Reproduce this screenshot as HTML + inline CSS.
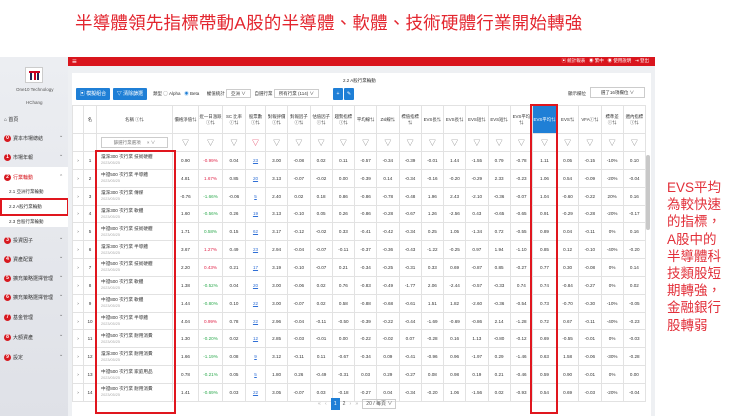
<!DOCTYPE html>
<html><head><meta charset="utf-8">
<style>
*{margin:0;padding:0;box-sizing:border-box}
body{width:740px;height:416px;background:#fff;position:relative;overflow:hidden;font-family:"Liberation Sans","Noto Sans CJK TC",sans-serif;color:#333}
.abs{position:absolute}
.title{left:75px;top:10px;font-size:17.5px;color:#e3262f;letter-spacing:0.2px;white-space:nowrap}
.side{left:0;top:57px;width:68px;height:359px;background:linear-gradient(#eceef2,#dfe1e7)}
.side .it{position:absolute;left:4px;font-size:5px;color:#333;white-space:nowrap}
.num{display:inline-block;width:7px;height:7px;border-radius:50%;background:#d71920;color:#fff;font-size:5px;text-align:center;line-height:7px;font-weight:bold;margin-right:2px;vertical-align:middle}
.chev{position:absolute;left:59px;font-size:5px;color:#666}
.redbar{left:68px;top:57px;width:587px;height:9px;background:#d9151d}
.main{left:68px;top:66px;width:587px;height:350px;background:#eef0f3}
.panel{left:72px;top:73px;width:579px;height:343px;background:#fff}
table{position:absolute;left:72px;top:105px;width:574px;border-collapse:collapse;table-layout:fixed;font-size:4.6px}
td{border:0.5px solid #e2e2e2;text-align:center;color:#333;overflow:hidden;white-space:nowrap}
tr.h td{height:28px;font-size:4.4px;line-height:6px;white-space:normal}
tr.f td{height:18px;color:#777;font-size:7px}
tr.d td{height:17.85px}
td.nm{text-align:left;padding-left:4px;line-height:6px}
td.nm span{color:#aaa;font-size:3.8px}
.r{color:#e0264a}.g{color:#2eaa4f}.l{color:#2f6fd6;text-decoration:underline}
.btn{height:12px;background:#1f7fd6;color:#fff;font-size:5px;line-height:12px;text-align:center;border-radius:1px}
.box{border:2px solid #e0161e}
.note{left:667px;top:179px;font-size:13.5px;line-height:17.2px;color:#e2303a;white-space:nowrap}
</style></head><body>
<div class="abs title">半導體領先指標帶動A股的半導體、軟體、技術硬體行業開始轉強</div>

<div class="abs side">
 <div style="position:absolute;left:25px;top:10px;width:18px;height:16px;border:1px solid #ccc;background:#fff"><div style="position:absolute;left:3px;top:3px;width:11px;height:9px;border-top:2px solid #c02;"></div><div style="position:absolute;left:4px;top:5px;width:2px;height:7px;background:#225"></div><div style="position:absolute;left:8px;top:5px;width:2px;height:7px;background:#c02"></div><div style="position:absolute;left:11px;top:5px;width:2px;height:7px;background:#225"></div></div>
 <div class="it" style="left:16px;top:30px;font-size:4.5px;color:#555">One10 Technology</div>
 <div class="it" style="left:26px;top:43px;font-size:4.5px;color:#555">HChang</div>
 <div class="it" style="top:59px">⌂ 首頁</div>
 <div class="it" style="top:78px"><span class="num">0</span>資本市場總結</div><div class="chev" style="top:76px">⌄</div>
 <div class="it" style="top:97px"><span class="num">1</span>市場年報</div><div class="chev" style="top:95px">⌄</div>
 <div style="position:absolute;left:0;top:110px;width:68px;height:60px;background:#fff"></div>
 <div class="it" style="top:117px;color:#d71920"><span class="num">2</span>行業輪動</div><div class="chev" style="top:117px">⌃</div>
 <div class="it" style="left:9px;top:132px;font-size:4.5px">2.1 亞洲行業輪動</div>
 <div class="it" style="left:9px;top:147px;font-size:4.5px">2.2 A股行業輪動</div>
 <div class="it" style="left:9px;top:162px;font-size:4.5px">2.3 台股行業輪動</div>
 <div class="it" style="top:180px"><span class="num">3</span>投資因子</div><div class="chev" style="top:178px">⌄</div>
 <div class="it" style="top:199px"><span class="num">4</span>資產配置</div><div class="chev" style="top:197px">⌄</div>
 <div class="it" style="top:218px"><span class="num">5</span>擴充策略選擇管理</div><div class="chev" style="top:216px">⌄</div>
 <div class="it" style="top:237px"><span class="num">6</span>擴充策略選擇管理</div><div class="chev" style="top:235px">⌄</div>
 <div class="it" style="top:257px"><span class="num">7</span>基金管理</div><div class="chev" style="top:255px">⌄</div>
 <div class="it" style="top:277px"><span class="num">8</span>大額資產</div><div class="chev" style="top:275px">⌄</div>
 <div class="it" style="top:297px"><span class="num">9</span>設定</div><div class="chev" style="top:295px">⌄</div>
</div>
<div class="abs box" style="left:0;top:198px;width:69px;height:18px"></div>

<div class="abs redbar"><span style="position:absolute;left:4px;top:0;color:#fff;font-size:8px;line-height:9px">≡</span><span style="position:absolute;right:6px;top:1px;color:#fff;font-size:4.5px;white-space:nowrap">▣ 統計報表 &nbsp; ◉ 繁中 &nbsp; ◉ 使用說明 &nbsp; ⇥ 登出</span></div>
<div class="abs main"></div>
<div class="abs panel"></div>
<div class="abs" style="left:343px;top:78px;font-size:4.5px">2.2 A股行業輪動</div>
<div class="abs btn" style="left:76px;top:88px;width:34px">▣ 模擬組合</div>
<div class="abs btn" style="left:113px;top:88px;width:34px">▽ 清除篩選</div>
<div class="abs" style="left:153px;top:91px;font-size:4.5px;white-space:nowrap">類型 ◯ Alpha &nbsp; <span style="color:#1f7fd6">◉</span> Beta &nbsp;&nbsp;&nbsp;&nbsp; 權值統計 <span style="border:0.5px solid #ccc;padding:1px 4px">亞洲 ∨</span> &nbsp; 自選行業 <span style="border:0.5px solid #ccc;padding:1px 4px">所有行業 (114) ∨</span></div>
<div class="abs btn" style="left:333px;top:88px;width:10px">+</div>
<div class="abs btn" style="left:344px;top:88px;width:10px">✎</div>
<div class="abs" style="left:568px;top:91px;font-size:4.5px">顯示欄位</div>
<div class="abs" style="left:590px;top:87px;width:55px;height:11px;border:0.5px solid #ccc;font-size:4.5px;line-height:10px;text-align:center">選了16項欄位 ∨</div>

<table>
<colgroup><col style="width:11px"><col style="width:13px"><col style="width:76px"><col style="width:26px"><col style="width:24px"><col style="width:23px"><col style="width:20px"><col span="12" style="width:22.25px"><col style="width:24px"><col span="4" style="width:22.25px"></colgroup>
<tr class="h"><td></td><td>名</td><td>名稱 ⓘ⇅</td><td>價格淨值⇅</td><td>近一日漲跌ⓘ⇅</td><td>SC 比率ⓘ⇅</td><td>股票數ⓘ⇅</td><td>對報評價ⓘ⇅</td><td>對報因子ⓘ⇅</td><td>估值因子ⓘ⇅</td><td>趨勢指標ⓘ⇅</td><td>平均線⇅</td><td>Zsl線⇅</td><td>標值指標⇅</td><td>EVS長⇅</td><td>EVS長⇅</td><td>EVS短⇅</td><td>EVS短⇅</td><td>EVS平均⇅</td><td style="background:#1f7fd6;color:#fff">EVS平均⇅</td><td>EVS⇅</td><td>VFAⓘ⇅</td><td>標準差ⓘ⇅</td><td>週內指標ⓘ⇅</td></tr>
<tr class="f"><td></td><td></td><td><div style="border:0.5px solid #ccc;margin:0 4px;height:11px;font-size:4.5px;line-height:10px">篩選行業選項 &nbsp;&nbsp;&nbsp; × ∨</div></td><td>▽</td><td>▽</td><td>▽</td><td style="color:#e0264a">▽</td><td>▽</td><td>▽</td><td>▽</td><td>▽</td><td>▽</td><td>▽</td><td>▽</td><td>▽</td><td>▽</td><td>▽</td><td>▽</td><td>▽</td><td>▽</td><td>▽</td><td>▽</td><td>▽</td><td>▽</td></tr>
<tr class="d"><td>›</td><td>1</td><td class="nm">滬深300 次行業 技術硬體<br><span>2023/05/25</span></td><td>0.90</td><td class="r">-0.99%</td><td>0.04</td><td class="l">23</td><td>3.00</td><td>-0.08</td><td>0.02</td><td>0.11</td><td>-0.57</td><td>-0.34</td><td>-0.39</td><td>-0.01</td><td>1.44</td><td>-1.55</td><td>0.79</td><td>-0.78</td><td>1.11</td><td>0.05</td><td>-0.15</td><td>-10%</td><td>0.10</td></tr>
<tr class="d"><td>›</td><td>2</td><td class="nm">中證500 次行業 半導體<br><span>2023/05/25</span></td><td>4.81</td><td class="r">1.67%</td><td>0.85</td><td class="l">20</td><td>3.13</td><td>-0.07</td><td>-0.02</td><td>0.00</td><td>-0.39</td><td>0.14</td><td>-0.34</td><td>-0.16</td><td>-0.20</td><td>-0.29</td><td>2.33</td><td>-0.23</td><td>1.06</td><td>0.54</td><td>-0.09</td><td>-20%</td><td>-0.04</td></tr>
<tr class="d"><td>›</td><td>3</td><td class="nm">滬深300 次行業 傳媒<br><span>2023/05/25</span></td><td>-0.76</td><td class="g">-1.66%</td><td>-0.06</td><td class="l">5</td><td>2.40</td><td>0.02</td><td>0.18</td><td>0.86</td><td>-0.86</td><td>-0.78</td><td>-0.48</td><td>1.96</td><td>2.43</td><td>-2.10</td><td>-0.36</td><td>-0.07</td><td>1.04</td><td>-0.60</td><td>-0.22</td><td>20%</td><td>0.16</td></tr>
<tr class="d"><td>›</td><td>4</td><td class="nm">滬深300 次行業 軟體<br><span>2023/05/25</span></td><td>1.60</td><td class="g">-0.56%</td><td>0.26</td><td class="l">19</td><td>3.13</td><td>-0.10</td><td>0.05</td><td>0.26</td><td>-0.86</td><td>-0.28</td><td>-0.67</td><td>1.26</td><td>-2.56</td><td>0.43</td><td>-0.65</td><td>-0.65</td><td>0.91</td><td>-0.29</td><td>-0.28</td><td>-20%</td><td>-0.17</td></tr>
<tr class="d"><td>›</td><td>5</td><td class="nm">中證800 次行業 技術硬體<br><span>2023/05/25</span></td><td>1.71</td><td class="g">0.58%</td><td>0.15</td><td class="l">62</td><td>3.17</td><td>-0.12</td><td>-0.02</td><td>0.33</td><td>-0.41</td><td>-0.42</td><td>-0.34</td><td>0.25</td><td>1.05</td><td>-1.34</td><td>0.72</td><td>-0.55</td><td>0.89</td><td>0.04</td><td>-0.11</td><td>0%</td><td>0.16</td></tr>
<tr class="d"><td>›</td><td>6</td><td class="nm">滬深300 次行業 半導體<br><span>2023/05/25</span></td><td>3.67</td><td class="r">1.27%</td><td>0.49</td><td class="l">23</td><td>2.94</td><td>-0.04</td><td>-0.07</td><td>-0.11</td><td>-0.37</td><td>-0.36</td><td>-0.43</td><td>-1.22</td><td>-0.25</td><td>0.97</td><td>1.94</td><td>-1.10</td><td>0.85</td><td>0.12</td><td>-0.10</td><td>-40%</td><td>-0.20</td></tr>
<tr class="d"><td>›</td><td>7</td><td class="nm">中證500 次行業 技術硬體<br><span>2023/05/25</span></td><td>2.20</td><td class="r">0.43%</td><td>0.21</td><td class="l">17</td><td>3.19</td><td>-0.10</td><td>-0.07</td><td>0.21</td><td>-0.34</td><td>-0.25</td><td>-0.31</td><td>0.33</td><td>0.69</td><td>-0.87</td><td>0.85</td><td>-0.27</td><td>0.77</td><td>0.30</td><td>-0.08</td><td>0%</td><td>0.14</td></tr>
<tr class="d"><td>›</td><td>8</td><td class="nm">中證500 次行業 軟體<br><span>2023/05/25</span></td><td>1.38</td><td class="g">-0.52%</td><td>0.04</td><td class="l">20</td><td>3.00</td><td>-0.06</td><td>0.02</td><td>0.76</td><td>-0.83</td><td>-0.49</td><td>-1.77</td><td>2.06</td><td>-2.44</td><td>-0.57</td><td>-0.33</td><td>0.74</td><td>0.74</td><td>-0.84</td><td>-0.27</td><td>0%</td><td>0.02</td></tr>
<tr class="d"><td>›</td><td>9</td><td class="nm">中證800 次行業 軟體<br><span>2023/05/25</span></td><td>1.44</td><td class="g">-0.80%</td><td>0.10</td><td class="l">22</td><td>3.00</td><td>-0.07</td><td>0.02</td><td>0.58</td><td>-0.88</td><td>-0.68</td><td>-0.61</td><td>1.51</td><td>1.82</td><td>-2.60</td><td>-0.36</td><td>-0.54</td><td>0.73</td><td>-0.70</td><td>-0.30</td><td>-10%</td><td>-0.05</td></tr>
<tr class="d"><td>›</td><td>10</td><td class="nm">中證800 次行業 半導體<br><span>2023/05/25</span></td><td>4.04</td><td class="r">0.99%</td><td>0.78</td><td class="l">22</td><td>2.96</td><td>-0.04</td><td>-0.11</td><td>-0.50</td><td>-0.39</td><td>-0.22</td><td>-0.44</td><td>-1.69</td><td>-0.69</td><td>-0.86</td><td>2.14</td><td>-1.28</td><td>0.72</td><td>0.67</td><td>-0.11</td><td>-40%</td><td>-0.23</td></tr>
<tr class="d"><td>›</td><td>11</td><td class="nm">中證500 次行業 耐用消費<br><span>2023/05/25</span></td><td>1.30</td><td class="g">-0.20%</td><td>0.02</td><td class="l">12</td><td>2.85</td><td>-0.03</td><td>-0.01</td><td>0.00</td><td>-0.22</td><td>-0.02</td><td>0.07</td><td>-0.28</td><td>0.16</td><td>1.13</td><td>-0.80</td><td>-0.12</td><td>0.69</td><td>-0.55</td><td>-0.01</td><td>0%</td><td>-0.03</td></tr>
<tr class="d"><td>›</td><td>12</td><td class="nm">滬深300 次行業 耐用消費<br><span>2023/05/25</span></td><td>1.66</td><td class="g">-1.19%</td><td>0.08</td><td class="l">9</td><td>3.12</td><td>-0.11</td><td>0.11</td><td>-0.67</td><td>-0.34</td><td>0.09</td><td>-0.41</td><td>-0.96</td><td>0.96</td><td>-1.97</td><td>0.29</td><td>-1.46</td><td>0.63</td><td>1.58</td><td>-0.06</td><td>-30%</td><td>-0.28</td></tr>
<tr class="d"><td>›</td><td>13</td><td class="nm">中證500 次行業 家庭用品<br><span>2023/05/25</span></td><td>0.78</td><td class="g">-0.21%</td><td>0.05</td><td class="l">5</td><td>1.80</td><td>0.26</td><td>-0.49</td><td>-0.31</td><td>0.03</td><td>0.29</td><td>-0.27</td><td>0.08</td><td>0.98</td><td>0.19</td><td>0.21</td><td>-0.46</td><td>0.59</td><td>0.90</td><td>-0.01</td><td>0%</td><td>0.00</td></tr>
<tr class="d"><td>›</td><td>14</td><td class="nm">中證800 次行業 耐用消費<br><span>2023/05/25</span></td><td>1.41</td><td class="g">-0.69%</td><td>0.03</td><td class="l">22</td><td>3.05</td><td>-0.07</td><td>0.03</td><td>-0.18</td><td>-0.27</td><td>0.04</td><td>-0.34</td><td>-0.20</td><td>1.06</td><td>-1.56</td><td>0.02</td><td>-0.93</td><td>0.54</td><td>0.69</td><td>-0.03</td><td>-20%</td><td>-0.04</td></tr>
</table>
<div class="abs" style="left:646px;top:155px;width:4px;height:75px;background:#c8c8c8;border-radius:2px"></div>
<div class="abs" style="left:318px;top:398px;font-size:5px;color:#aaa;white-space:nowrap">« &nbsp; ‹ &nbsp;&nbsp;<span style="display:inline-block;width:9px;height:12px;background:#1f7fd6;color:#fff;text-align:center;line-height:12px">1</span>&nbsp;&nbsp;<span style="color:#555">2</span> &nbsp; › &nbsp; » &nbsp; <span style="border:0.5px solid #ccc;padding:1px 3px;color:#555">20 / 每頁 ∨</span></div>

<div class="abs box" style="left:95px;top:150px;width:81px;height:264px"></div>
<div class="abs box" style="left:530px;top:104px;width:28px;height:310px"></div>

<div class="abs note">EVS平均<br>為較快速<br>的指標，<br>A股中的<br>半導體科<br>技類股短<br>期轉強，<br>金融銀行<br>股轉弱</div>
</body></html>
